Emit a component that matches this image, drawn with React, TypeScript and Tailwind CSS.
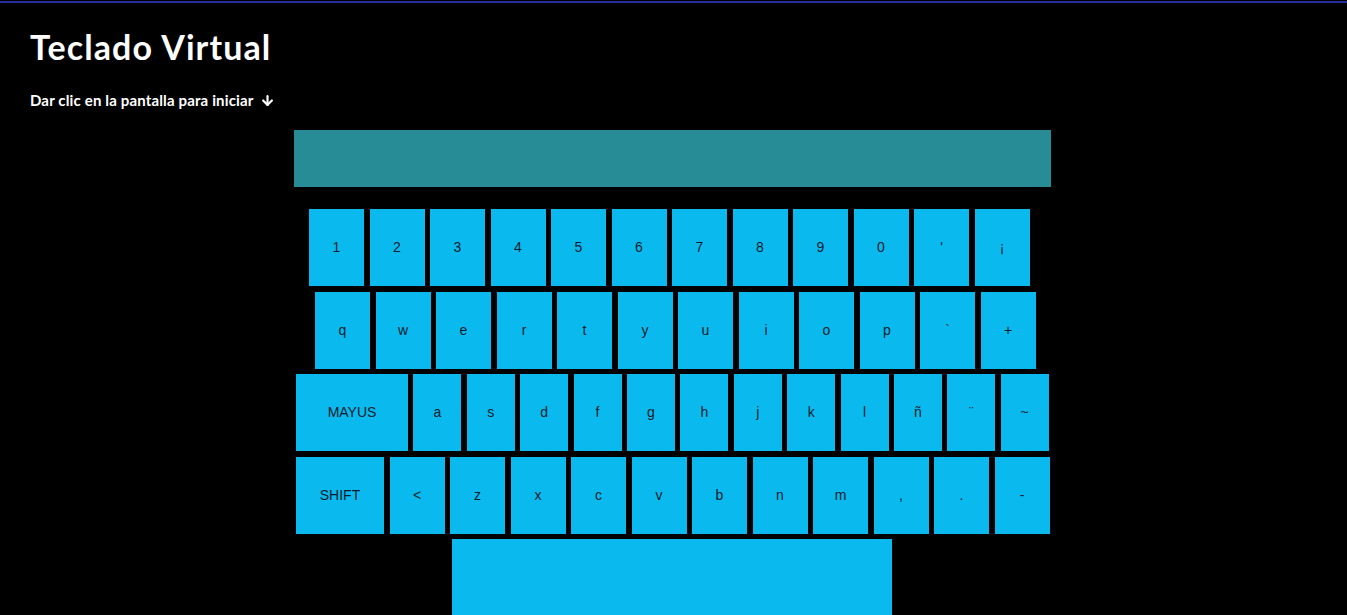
import React from 'react';
import { ArrowDown } from 'lucide-react';

const rowOne = ['1', '2', '3', '4', '5', '6', '7', '8', '9', '0', "'", '¡'];
const rowTwo = ['q', 'w', 'e', 'r', 't', 'y', 'u', 'i', 'o', 'p', '`', '+'];
const rowThree = ['a', 's', 'd', 'f', 'g', 'h', 'j', 'k', 'l', 'ñ', '¨', '~'];
const rowFour = ['<', 'z', 'x', 'c', 'v', 'b', 'n', 'm', ',', '.', '-'];

const keyClass =
  'h-full flex items-center justify-center bg-[#0abaef] text-[#0d1b2a] text-[14px] font-["Liberation_Sans",Arial,sans-serif]';

const Key: React.FC<{ label: string; width: string }> = ({ label, width }) => (
  <div className={`${keyClass} ${width}`}>{label}</div>
);

const App: React.FC = () => {
  return (
    <div className="h-[615px] w-full overflow-hidden bg-black">
      <div className="h-px bg-black" />
      <div className="h-[2px] bg-[#2a2e9c]" />

      <div className="px-[30px] pt-[24px]">
        <h1 className='text-[34px] leading-[40px] font-bold tracking-[1.1px] text-white font-["Lato","Open_Sans",sans-serif]'>
          Teclado Virtual
        </h1>
        <p className='mt-[25px] flex items-center gap-[6px] text-[15px] leading-[16px] font-bold tracking-[0.15px] text-white font-["Lato","Open_Sans",sans-serif]'>
          Dar clic en la pantalla para iniciar
          <ArrowDown className="h-[15px] w-[15px]" strokeWidth={3.5} />
        </p>
      </div>

      <div className="ml-[294px] mt-[22px] w-[757px]">
        <div className="h-[57px] bg-[#288c96]" />

        <div className="mt-[22px] flex h-[77px] gap-[5.5px] pl-[15px]">
          {rowOne.map((k) => (
            <Key key={k} label={k} width="w-[55px]" />
          ))}
        </div>

        <div className="mt-[6px] flex h-[77px] gap-[5.5px] pl-[21px]">
          {rowTwo.map((k) => (
            <Key key={k} label={k} width="w-[55px]" />
          ))}
        </div>

        <div className="mt-[5px] flex h-[77px] gap-[5.4px] pl-[2px]">
          <Key label="MAYUS" width="w-[112px]" />
          {rowThree.map((k) => (
            <Key key={k} label={k} width="w-[48px]" />
          ))}
        </div>

        <div className="mt-[6px] flex h-[77px] gap-[5.5px] pl-[2px]">
          <Key label="SHIFT" width="w-[88px]" />
          {rowFour.map((k) => (
            <Key key={k} label={k} width="w-[55px]" />
          ))}
        </div>

        <div className="mt-[5px] ml-[158px] h-[80px] w-[440px] bg-[#0abaef]" />
      </div>
    </div>
  );
};

export default App;
